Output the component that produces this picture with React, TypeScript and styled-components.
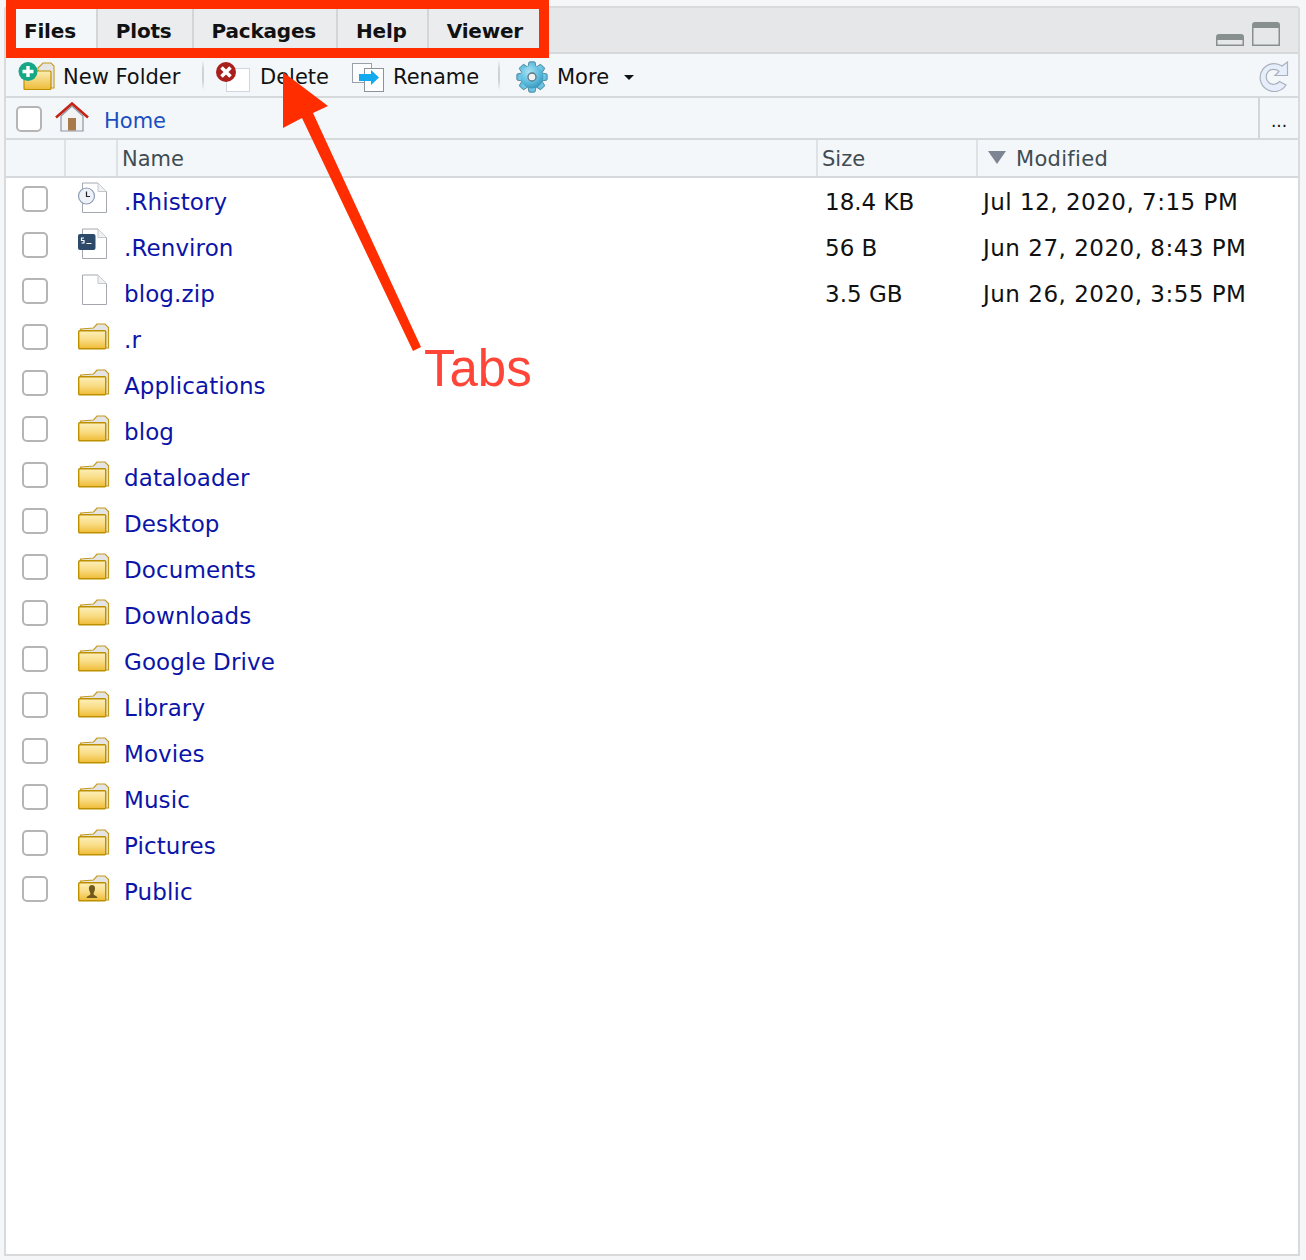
import React from "react";
import styled, { createGlobalStyle } from "styled-components";

const GlobalStyle = createGlobalStyle`
  html, body {
    margin: 0;
    padding: 0;
    background: #f5f6f8;
  }
  body {
    font-family: "DejaVu Sans", "Liberation Sans", sans-serif;
    position: relative;
    height: 1260px;
    overflow: hidden;
  }
`;

const COLUMNS = "60px 52px 700px 160px 1fr";

const files = [
  { name: ".Rhistory", kind: "history", size: "18.4 KB", modified: "Jul 12, 2020, 7:15 PM" },
  { name: ".Renviron", kind: "shell", size: "56 B", modified: "Jun 27, 2020, 8:43 PM" },
  { name: "blog.zip", kind: "file", size: "3.5 GB", modified: "Jun 26, 2020, 3:55 PM" },
  { name: ".r", kind: "folder" },
  { name: "Applications", kind: "folder" },
  { name: "blog", kind: "folder" },
  { name: "dataloader", kind: "folder" },
  { name: "Desktop", kind: "folder" },
  { name: "Documents", kind: "folder" },
  { name: "Downloads", kind: "folder" },
  { name: "Google Drive", kind: "folder" },
  { name: "Library", kind: "folder" },
  { name: "Movies", kind: "folder" },
  { name: "Music", kind: "folder" },
  { name: "Pictures", kind: "folder" },
  { name: "Public", kind: "public" },
];

const tabs = ["Files", "Plots", "Packages", "Help", "Viewer"];

function FolderGlyph({ person }: { person?: boolean }) {
  return (
    <svg width="33" height="28" viewBox="0 0 33 28">
      <defs>
        <linearGradient id="folderFill" x1="0" y1="0" x2="0" y2="1">
          <stop offset="0" stopColor="#fdf0bb" />
          <stop offset="0.5" stopColor="#f9dc85" />
          <stop offset="1" stopColor="#efbc35" />
        </linearGradient>
      </defs>
      <path d="M2.5 6 L15.5 5 L19 1 L27 1 L30.5 4.5 L30.5 25 L2.5 25 Z" fill="#e4e4e4" stroke="#c49a1c" strokeWidth="1.2" />
      <rect x="0.7" y="7.7" width="27" height="18" rx="1" fill="url(#folderFill)" stroke="#bd9000" strokeWidth="1.4" />
      {person ? (
        <path d="M14 10 C11 10 10.5 13 11.3 15.5 C11.8 17 12.4 17.6 12.4 19 C12.4 20.5 9 20.5 8.5 23 L19.5 23 C19 20.5 15.6 20.5 15.6 19 C15.6 17.6 16.2 17 16.7 15.5 C17.5 13 17 10 14 10 Z" fill="#6f5a1c" />
      ) : null}
    </svg>
  );
}

function PageGlyph({ kind }: { kind: string }) {
  return (
    <svg width="34" height="32" viewBox="0 0 34 32">
      <path d="M5.5 1 L21 1 L29.5 9.5 L29.5 30.5 L5.5 30.5 Z" fill="#fff" stroke="#a4a8ae" strokeWidth="1" />
      <path d="M21 1 L21 9.5 L29.5 9.5" fill="#f0f1f3" stroke="#c4c7cb" strokeWidth="1" />
      {kind === "history" ? (
        <g>
          <circle cx="9.5" cy="14" r="8" fill="#eef2f8" stroke="#8d9db5" strokeWidth="1.2" />
          <path d="M9.5 9.5 L9.5 14.5 L13 14.5" fill="none" stroke="#222" strokeWidth="1.2" />
        </g>
      ) : null}
      {kind === "shell" ? (
        <g>
          <rect x="1" y="6" width="17.5" height="16" rx="2" fill="#2e4a6b" />
          <path d="M7 10 L4.5 10 L4.5 12.5 L7 12.5 L7 15 L4.5 15 M9.5 15.5 L14.5 15.5" fill="none" stroke="#fff" strokeWidth="1.2" />
        </g>
      ) : null}
    </svg>
  );
}

function FileIcon({ kind }: { kind: string }) {
  if (kind === "folder") return <FolderGlyph />;
  if (kind === "public") return <FolderGlyph person />;
  return <PageGlyph kind={kind} />;
}

function NewFolderIcon() {
  return (
    <svg width="37" height="30" viewBox="0 0 37 30">
      <defs>
        <linearGradient id="newFolderFill" x1="0" y1="0" x2="0" y2="1">
          <stop offset="0" stopColor="#fbeeb5" />
          <stop offset="1" stopColor="#eebb38" />
        </linearGradient>
      </defs>
      <path d="M20 6 L25 1 L33 1 L36 4 L36 26 L20 26 Z" fill="#e6e6e6" stroke="#c49a1c" strokeWidth="1.1" />
      <rect x="6" y="9" width="27" height="18.5" rx="1" fill="url(#newFolderFill)" stroke="#bd9000" strokeWidth="1.2" />
      <circle cx="10" cy="9.5" r="9.5" fill="#14a886" />
      <path d="M10 4 L10 15 M4.5 9.5 L15.5 9.5" stroke="#fff" strokeWidth="3.4" />
    </svg>
  );
}

function DeleteIcon() {
  return (
    <svg width="34" height="30" viewBox="0 0 34 30">
      <rect x="10.5" y="6.5" width="23" height="23" fill="#fff" stroke="#cfd6de" />
      <circle cx="10" cy="10" r="10" fill="#a81f1c" />
      <path d="M5.5 5.5 L14.5 14.5 M14.5 5.5 L5.5 14.5" stroke="#fff" strokeWidth="3.6" />
    </svg>
  );
}

function RenameIcon() {
  return (
    <svg width="32" height="29" viewBox="0 0 32 29">
      <rect x="0.5" y="0.5" width="19" height="19" fill="#fbfcfe" stroke="#9aa0a8" />
      <rect x="12.5" y="5.5" width="19" height="23" fill="#fff" stroke="#8c939b" />
      <path d="M7 11 L19 11 L19 7 L27 14.5 L19 22 L19 18 L7 18 Z" fill="#12a9ee" />
    </svg>
  );
}

function GearIcon() {
  const teeth = [0, 45, 90, 135, 180, 225, 270, 315];
  return (
    <svg width="32" height="32" viewBox="0 0 32 32">
      <defs>
        <radialGradient id="gearFill" gradientUnits="userSpaceOnUse" cx="13" cy="11" r="20">
          <stop offset="0" stopColor="#a9e2f4" />
          <stop offset="0.55" stopColor="#59bbdd" />
          <stop offset="1" stopColor="#2a84a8" />
        </radialGradient>
      </defs>
      <g stroke="#44798f" strokeWidth="0.8" fill="url(#gearFill)">
        {teeth.map((angle) => (
          <path key={angle} d="M11.5 9 L12.8 1.6 Q13 0.8 13.8 0.8 L18.2 0.8 Q19 0.8 19.2 1.6 L20.5 9 Z" transform={`rotate(${angle} 16 16)`} />
        ))}
      </g>
      <circle cx="16" cy="16" r="11.4" fill="url(#gearFill)" />
      <circle cx="16" cy="16" r="4" fill="#eef2f3" stroke="#5d7482" strokeWidth="1.3" />
    </svg>
  );
}

function RefreshIcon() {
  return (
    <svg width="30" height="31" viewBox="0 0 30 31">
      <path
        d="M23 5 L28.5 1 L28.5 14.5 L16 14.5 L20 10.5 A7.5 7.5 0 1 0 20.5 20.5 L27 24 A14 14 0 1 1 23 5 Z"
        fill="#e6edfb"
        stroke="#aab0bc"
        strokeWidth="1.2"
      />
    </svg>
  );
}

function HomeIcon() {
  return (
    <svg width="34" height="30" viewBox="0 0 34 30">
      <path d="M6 14 L17 4 L28 14 L28 29 L6 29 Z" fill="#f1f3f5" stroke="#8b98a4" strokeWidth="1.2" />
      <rect x="13" y="16" width="8" height="12.5" fill="#a87a4c" />
      <path d="M1 15.5 L17 1.5 L33 15.5" fill="none" stroke="#c42318" strokeWidth="2.6" />
    </svg>
  );
}

function WindowIcon({ collapsed }: { collapsed?: boolean }) {
  return collapsed ? (
    <svg width="28" height="12" viewBox="0 0 28 12">
      <path d="M0 12 L0 3 Q0 0 3 0 L25 0 Q28 0 28 3 L28 12 L26.5 12 L26.5 6 L1.5 6 L1.5 12 Z M1.5 10.5 L26.5 10.5 L26.5 12 L1.5 12 Z" fill="#87908f" />
    </svg>
  ) : (
    <svg width="28" height="24" viewBox="0 0 28 24">
      <path d="M0 24 L0 3 Q0 0 3 0 L25 0 Q28 0 28 3 L28 24 Z M1.5 6 L1.5 22.5 L26.5 22.5 L26.5 6 Z" fill="#87908f" fillRule="evenodd" />
    </svg>
  );
}

const Panel = styled.div`
  box-sizing: border-box;
  width: 1296px;
  height: 1250px;
  margin: 6px 0 0 4px;
  border: 2px solid #d8dadc;
  border-radius: 4px 4px 0 0;
  background: #fff;
`;

const TabBar = styled.div`
  display: flex;
  justify-content: space-between;
  height: 44px;
  background: #e6e7e9;
  border-bottom: 2px solid #d6d9db;
`;

const TabList = styled.div`
  display: flex;
`;

const Tab = styled.div<{ $active?: boolean }>`
  display: flex;
  align-items: center;
  padding: 2px 20px 0 18px;
  border-right: 2px solid #d3d5d7;
  background: ${(p) => (p.$active ? "#f4f7f9" : "#ebecee")};
  font-size: 20px;
  font-weight: 700;
  letter-spacing: -0.2px;
  color: #111;
`;

const WindowButtons = styled.div`
  display: flex;
  align-items: flex-end;
  gap: 8px;
  padding: 0 18px 6px 0;
`;

const Toolbar = styled.div`
  display: flex;
  align-items: center;
  height: 42px;
  padding: 0 9px 0 12px;
  background: #f4f7f9;
  border-bottom: 2px solid #d6d9db;
`;

const ToolButton = styled.div<{ $gap: number; $width: number; $indent?: number }>`
  display: flex;
  align-items: center;
  gap: ${(p) => p.$gap}px;
  width: ${(p) => p.$width}px;
  margin-top: 4px;
  margin-left: ${(p) => p.$indent ?? 0}px;
  font-size: 21px;
  color: #111;
  white-space: nowrap;
  svg {
    flex: none;
  }
`;

const ToolSeparator = styled.div`
  width: 2px;
  height: 30px;
  margin-right: 12px;
  background: linear-gradient(#f4f7f9, #d0d3d6 30%, #d0d3d6 70%, #f4f7f9);
`;

const Caret = styled.span`
  width: 0;
  height: 0;
  margin-left: 6px;
  border-left: 5px solid transparent;
  border-right: 5px solid transparent;
  border-top: 5px solid #111;
`;

const ToolSpacer = styled.div`
  flex: 1;
`;

const RefreshButton = styled.div`
  margin-top: 3px;
  line-height: 0;
`;

const PathBar = styled.div`
  display: flex;
  align-items: center;
  height: 40px;
  background: #f4f7f9;
  border-bottom: 2px solid #d6d9db;
  svg {
    flex: none;
    margin-top: -2px;
  }
`;

const PathCheck = styled.span`
  box-sizing: border-box;
  flex: none;
  width: 26px;
  height: 26px;
  margin: 2px 13px 0 10px;
  border: 2px solid #b5b5b5;
  border-radius: 5px;
  background: #fff;
`;

const PathLink = styled.a`
  flex: 1;
  margin-left: 15px;
  padding-top: 6px;
  font-size: 21px;
  color: #1a4fc2;
`;

const PathMore = styled.div`
  display: flex;
  align-items: flex-end;
  justify-content: center;
  align-self: stretch;
  width: 38px;
  padding-bottom: 5px;
  border-left: 2px solid #d3d5d7;
  font-size: 17px;
  line-height: 24px;
  color: #111;
`;

const HeaderRow = styled.div`
  display: grid;
  grid-template-columns: ${COLUMNS};
  height: 36px;
  background: #f4f7f9;
  border-bottom: 2px solid #d6d9db;
`;

const HeaderCell = styled.div<{ $last?: boolean }>`
  display: flex;
  align-items: center;
  gap: 10px;
  padding: 2px 0 0 4px;
  border-right: ${(p) => (p.$last ? "none" : "2px solid #dfe2e4")};
  font-size: 21px;
  letter-spacing: ${(p) => (p.$last ? 0.3 : 0)}px;
  color: #414c52;
`;

const SortArrow = styled.span`
  width: 0;
  height: 0;
  margin: -4px 0 0 6px;
  border-left: 9px solid transparent;
  border-right: 9px solid transparent;
  border-top: 13px solid #7d8594;
`;

const Row = styled.div`
  display: grid;
  grid-template-columns: ${COLUMNS};
  height: 46px;
  line-height: 48px;
  font-size: 23px;
`;

const CheckCell = styled.div`
  padding: 8px 0 0 16px;
`;

const RowCheck = styled.span`
  display: block;
  box-sizing: border-box;
  width: 26px;
  height: 26px;
  border: 2px solid #b5b5b5;
  border-radius: 5px;
`;

const IconCell = styled.div<{ $page: boolean }>`
  padding-top: ${(p) => (p.$page ? 4 : 7)}px;
  padding-left: ${(p) => (p.$page ? 11 : 12)}px;
  line-height: 0;
`;

const NameCell = styled.a`
  padding-left: 6px;
  letter-spacing: 0.1px;
  color: #0b14a8;
`;

const SizeCell = styled.div`
  padding-left: 7px;
  color: #111;
`;

const DateCell = styled.div`
  padding-left: 5px;
  letter-spacing: 0.5px;
  color: #111;
  white-space: nowrap;
`;

const TabFrame = styled.div`
  position: absolute;
  top: 0;
  left: 6px;
  box-sizing: border-box;
  width: 543px;
  height: 58px;
  border: 10px solid #ff2d00;
  border-top-width: 9px;
`;

const ArrowLayer = styled.svg`
  position: absolute;
  top: 0;
  left: 0;
`;

const Callout = styled.div`
  position: absolute;
  top: 335px;
  left: 424px;
  font-family: "Liberation Sans", Arial, sans-serif;
  font-size: 51px;
  line-height: 68px;
  color: #ff4538;
`;

export default function App() {
  return (
    <>
      <GlobalStyle />
      <Panel>
        <TabBar>
          <TabList>
            {tabs.map((tab, i) => (
              <Tab key={tab} $active={i === 0}>{tab}</Tab>
            ))}
          </TabList>
          <WindowButtons>
            <WindowIcon collapsed />
            <WindowIcon />
          </WindowButtons>
        </TabBar>
        <Toolbar>
          <ToolButton $gap={8} $width={184}>
            <NewFolderIcon />
            New Folder
          </ToolButton>
          <ToolSeparator />
          <ToolButton $gap={10} $width={136}>
            <DeleteIcon />
            Delete
          </ToolButton>
          <ToolButton $gap={9} $width={146}>
            <RenameIcon />
            Rename
          </ToolButton>
          <ToolSeparator />
          <ToolButton $gap={9} $width={136} $indent={4}>
            <GearIcon />
            More
            <Caret />
          </ToolButton>
          <ToolSpacer />
          <RefreshButton>
            <RefreshIcon />
          </RefreshButton>
        </Toolbar>
        <PathBar>
          <PathCheck />
          <HomeIcon />
          <PathLink>Home</PathLink>
          <PathMore>...</PathMore>
        </PathBar>
        <HeaderRow>
          <HeaderCell />
          <HeaderCell />
          <HeaderCell>Name</HeaderCell>
          <HeaderCell>Size</HeaderCell>
          <HeaderCell $last>
            <SortArrow />
            Modified
          </HeaderCell>
        </HeaderRow>
        {files.map((file) => (
          <Row key={file.name}>
            <CheckCell>
              <RowCheck />
            </CheckCell>
            <IconCell $page={file.kind !== "folder" && file.kind !== "public"}>
              <FileIcon kind={file.kind} />
            </IconCell>
            <NameCell>{file.name}</NameCell>
            <SizeCell>{file.size}</SizeCell>
            <DateCell>{file.modified}</DateCell>
          </Row>
        ))}
      </Panel>
      <TabFrame />
      <ArrowLayer width="1306" height="1260" viewBox="0 0 1306 1260">
        <path
          d="M283 72 L328 106 L313 113 L421 347 L413 351 L302 118 L283 128 Z"
          fill="#ff2d00"
        />
      </ArrowLayer>
      <Callout>Tabs</Callout>
    </>
  );
}
